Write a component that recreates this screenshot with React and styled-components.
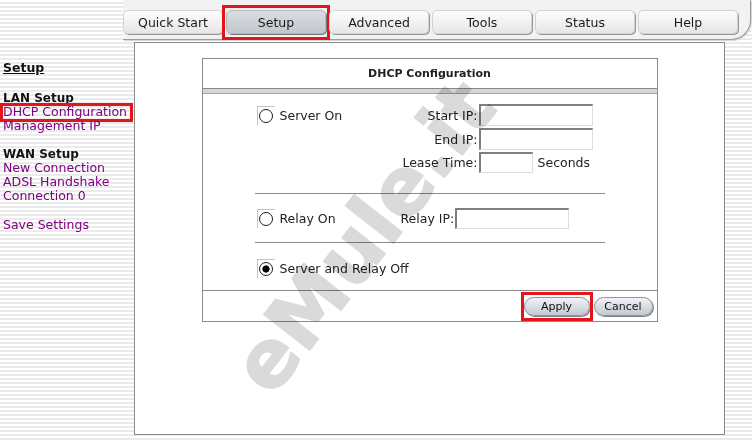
import React from 'react';
import styled, { createGlobalStyle, css } from 'styled-components';

const GlobalStyle = createGlobalStyle`
  *, *::before, *::after { box-sizing: border-box; }
  html, body { margin: 0; padding: 0; }
  body {
    background: repeating-linear-gradient(to bottom, #ffffff 0px, #ffffff 2px, #ebebeb 2px, #ebebeb 4px);
    font-family: "DejaVu Sans", Verdana, sans-serif;
    color: #222;
  }
`;

const redFrame = css`
  &::after {
    content: '';
    position: absolute;
    border: 3px solid #e5141b;
    pointer-events: none;
  }
`;

const Page = styled.div`
  position: relative;
  width: 752px;
  height: 442px;
  overflow: hidden;
`;

const TopBar = styled.nav`
  margin-left: 123px;
  width: 628px;
  height: 40px;
  padding-top: 10px;
  display: flex;
  gap: 3px;
  background: #f2f2f2;
  border-bottom: 1px solid #9b9b9b;
  border-right: 1px solid #9b9b9b;
  border-bottom-right-radius: 20px;
  box-shadow: 1px 1px 0 #d6d6d6;
`;

const Tab = styled.div`
  position: relative;
  width: 100px;
  height: 24px;
  display: flex;
  align-items: center;
  justify-content: center;
  font-size: 12.5px;
  color: #1a1a1a;
  border-radius: 5px;
  border: 1px solid #d2d2d2;
  background: linear-gradient(to bottom, #fdfdfd, #e6e6e6);
  box-shadow: 1px 1px 0 #969696;
  ${p => p.$active && css`
    background: linear-gradient(to bottom, #d9dde1, #c1c7cd);
    border-color: #b4b9bf;
    box-shadow: 1px 1px 0 #6f757b;
    ${redFrame}
    &::after { left: -5px; right: -5px; top: -6px; bottom: -7px; }
  `}
`;

const Body = styled.div`
  display: flex;
  padding-top: 2px;
`;

const SideNav = styled.aside`
  width: 134px;
  padding: 19px 0 0 3px;
  font-size: 12.5px;
  line-height: 14px;
`;

const NavTitle = styled.div`
  font-weight: bold;
  text-decoration: underline;
  color: #111;
  margin-bottom: 16px;
`;

const NavHead = styled.div`
  font-weight: bold;
  font-size: 12px;
  color: #111;
`;

const NavLink = styled.a`
  position: relative;
  display: block;
  width: 130px;
  color: #800080;
  text-decoration: none;
  white-space: nowrap;
  ${p => p.$marked && css`
    ${redFrame}
    &::after { left: -3px; right: 0; top: -2px; bottom: -3px; }
  `}
`;

const NavGroup = styled.div`
  margin-top: ${p => p.$gap}px;
`;

const Panel = styled.main`
  width: 591px;
  height: 393px;
  border: 1px solid #8a8a8a;
  background: #fff;
  padding-top: 15px;
`;

const ConfigBox = styled.section`
  width: 456px;
  margin: 0 auto;
  border: 1px solid #8a8a8a;
  background: #fff;
`;

const BoxTitle = styled.div`
  height: 29px;
  line-height: 29px;
  text-align: center;
  font-size: 11px;
  font-weight: bold;
  color: #222;
`;

const Band = styled.div`
  height: 6px;
  background: #d3d7db;
  border-top: 1px solid #8a8a8a;
  border-bottom: 1px solid #a5a5a5;
`;

const FormArea = styled.div`
  width: 350px;
  margin: 0 auto;
  padding-top: 10px;
  font-size: 12.5px;
`;

const OptionRow = styled.div`
  display: flex;
  align-items: ${p => (p.$top ? 'flex-start' : 'center')};
  padding: ${p => p.$pad || '0'};
`;

const RadioCell = styled.div`
  width: ${p => (p.$auto ? 'auto' : '146px')};
  height: 22px;
  display: flex;
  align-items: center;
  flex-shrink: 0;
`;

const RadioBox = styled.span`
  flex-shrink: 0;
  width: 18px;
  height: 19px;
  margin-left: 2px;
  display: inline-flex;
  align-items: center;
  justify-content: center;
  border-left: 1px solid #c2c2c2;
  border-top: 1px solid #c2c2c2;
`;

const RadioCircle = styled.span`
  flex-shrink: 0;
  width: 14px;
  height: 14px;
  border-radius: 50%;
  border: 1px solid #1a1a1a;
  background: #fff;
  ${p => p.$checked && css`
    border-width: 1.5px;
    background: radial-gradient(circle, #000 0, #000 3.3px, #fff 3.9px);
  `}
`;

const OptionLabel = styled.span`
  margin-left: 5px;
  white-space: nowrap;
`;

const FieldGrid = styled.div`
  display: grid;
  grid-template-columns: 78px auto;
  row-gap: 2px;
  align-items: center;
`;

const FieldLabel = styled.span`
  text-align: ${p => (p.$right ? 'right' : 'left')};
  white-space: nowrap;
  padding-right: 1px;
`;

const FieldLine = styled.div`
  display: flex;
  align-items: center;
`;

const TextInput = styled.input`
  width: ${p => p.$w}px;
  height: ${p => p.$h || 22}px;
  margin: 0;
  padding: 0 2px;
  background: #fff;
  border-style: solid;
  border-width: 2px 1px 1px 2px;
  border-color: #7f7f7f #dedede #dedede #7f7f7f;
  font: inherit;
  outline: none;
`;

const Unit = styled.span`
  margin-left: 5px;
`;

const Divider = styled.hr`
  margin: ${p => p.$top || 0}px 0 0;
  border: 0;
  border-top: 1px solid #8a8a8a;
  height: 0;
`;

const Footer = styled.div`
  height: 31px;
  border-top: 1px solid #8a8a8a;
  display: flex;
  justify-content: flex-end;
  align-items: center;
  gap: 4px;
  padding-right: 4px;
`;

const PillButton = styled.button`
  position: relative;
  width: ${p => p.$w}px;
  height: 19px;
  padding: 0;
  font-family: "DejaVu Sans", Verdana, sans-serif;
  font-size: 11px;
  color: #111;
  border: 1px solid #8e96a0;
  border-radius: 10px;
  background: linear-gradient(to bottom, #f0f3f6, #c3c9d1);
  box-shadow: 1px 1px 0 #7b828a;
  ${p => p.$marked && css`
    ${redFrame}
    &::after { left: -4px; right: -4px; top: -6px; bottom: -6px; }
  `}
`;

const Watermark = styled.div`
  position: absolute;
  left: 364px;
  top: 237px;
  transform: translate(-50%, -50%) rotate(-52deg);
  font-family: "DejaVu Sans", sans-serif;
  font-weight: bold;
  font-size: 80px;
  line-height: 1;
  color: #dadada;
  -webkit-text-stroke: 1.5px #dadada;
  white-space: nowrap;
  mix-blend-mode: multiply;
  pointer-events: none;
  z-index: 10;
`;

function Radio({ checked }) {
  return (
    <RadioBox>
      <RadioCircle $checked={checked} />
    </RadioBox>
  );
}

const tabs = ['Quick Start', 'Setup', 'Advanced', 'Tools', 'Status', 'Help'];

export default function App() {
  return (
    <>
      <GlobalStyle />
      <Page>
        <TopBar>
          {tabs.map(t => (
            <Tab key={t} $active={t === 'Setup'}>{t}</Tab>
          ))}
        </TopBar>
        <Body>
          <SideNav>
            <NavTitle>Setup</NavTitle>
            <NavHead>LAN Setup</NavHead>
            <NavLink $marked>DHCP Configuration</NavLink>
            <NavLink>Management IP</NavLink>
            <NavGroup $gap={14}>
              <NavHead>WAN Setup</NavHead>
              <NavLink>New Connection</NavLink>
              <NavLink>ADSL Handshake</NavLink>
              <NavLink>Connection 0</NavLink>
            </NavGroup>
            <NavGroup $gap={15}>
              <NavLink>Save Settings</NavLink>
            </NavGroup>
          </SideNav>
          <Panel>
            <ConfigBox>
              <BoxTitle>DHCP Configuration</BoxTitle>
              <Band />
              <FormArea>
                <OptionRow $top>
                  <RadioCell>
                    <Radio />
                    <OptionLabel>Server On</OptionLabel>
                  </RadioCell>
                  <FieldGrid>
                    <FieldLabel $right>Start IP:</FieldLabel>
                    <TextInput $w={114} />
                    <FieldLabel $right>End IP:</FieldLabel>
                    <TextInput $w={114} />
                    <FieldLabel $right>Lease Time:</FieldLabel>
                    <FieldLine>
                      <TextInput $w={54} $h={21} />
                      <Unit>Seconds</Unit>
                    </FieldLine>
                  </FieldGrid>
                </OptionRow>
                <Divider $top={20} />
                <OptionRow $pad="13px 0">
                  <RadioCell>
                    <Radio />
                    <OptionLabel>Relay On</OptionLabel>
                  </RadioCell>
                  <FieldLabel>Relay IP:</FieldLabel>
                  <TextInput $w={114} $h={21} />
                </OptionRow>
                <Divider />
                <OptionRow $pad="14px 0 11px">
                  <RadioCell $auto>
                    <Radio checked />
                    <OptionLabel>Server and Relay Off</OptionLabel>
                  </RadioCell>
                </OptionRow>
              </FormArea>
              <Footer>
                <PillButton $w={66} $marked>Apply</PillButton>
                <PillButton $w={59}>Cancel</PillButton>
              </Footer>
            </ConfigBox>
          </Panel>
        </Body>
        <Watermark>eMule.it</Watermark>
      </Page>
    </>
  );
}
